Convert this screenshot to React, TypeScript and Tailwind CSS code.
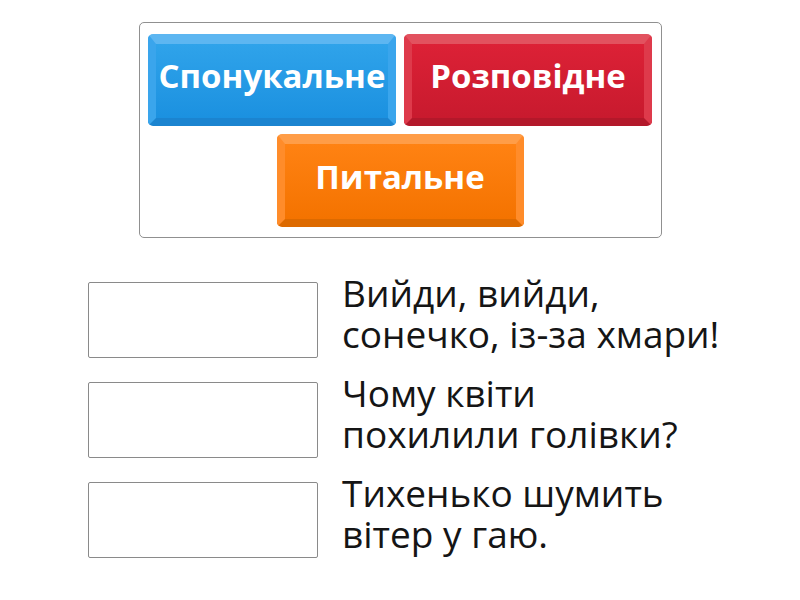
import React from "react";

const btnBase =
  "flex items-center justify-center rounded-[5px] border-solid border-x-[8px] border-t-[10px] border-b-[8px] text-white font-bold text-[33px] leading-none pb-[11px]";

function Row({ lines }: { lines: string[] }) {
  return (
    <div className="flex items-start h-[100px]">
      <div className="mt-[12px] w-[230px] h-[76px] border border-[#8a8a8a] rounded-[2px] bg-white" />
      <div className="ml-[24px] mt-[2px] text-[37px] leading-[41px] text-[#151515] whitespace-nowrap">
        {lines.map((l) => (
          <div key={l}>{l}</div>
        ))}
      </div>
    </div>
  );
}

export default function App() {
  return (
    <div
      className="w-[800px] h-[600px] bg-white relative"
      style={{ fontFamily: '"Open Sans", sans-serif' }}
    >
      <div className="pt-[22px] flex justify-center">
        <div className="w-[523px] h-[216px] border border-[#909090] rounded-[5px] px-[9px] pt-[11px] flex flex-col items-center gap-[8px]">
          <div className="flex gap-[8px]">
            <div
              className={`${btnBase} w-[248px] h-[92px] border-t-[#5db6f1] border-x-[#3aa5ec] border-b-[#1b84d0] bg-gradient-to-b from-[#2fa3ea] to-[#1b91e0]`}
            >
              Спонукальне
            </div>
            <div
              className={`${btnBase} w-[248px] h-[92px] border-t-[#e2525f] border-x-[#de3a4b] border-b-[#b3182a] bg-gradient-to-b from-[#dc2136] to-[#c81a2e]`}
            >
              Розповідне
            </div>
          </div>
          <div
            className={`${btnBase} w-[247px] h-[93px] border-t-[#ff9d47] border-x-[#ff8c2a] border-b-[#dd6a00] bg-gradient-to-b from-[#ff8212] to-[#f47300]`}
          >
            Питальне
          </div>
        </div>
      </div>
      <div className="pl-[88px] pt-[32px] flex flex-col">
        <Row lines={["Вийди, вийди,", "сонечко, із-за хмари!"]} />
        <Row lines={["Чому квіти", "похилили голівки?"]} />
        <Row lines={["Тихенько шумить", "вітер у гаю."]} />
      </div>
    </div>
  );
}
